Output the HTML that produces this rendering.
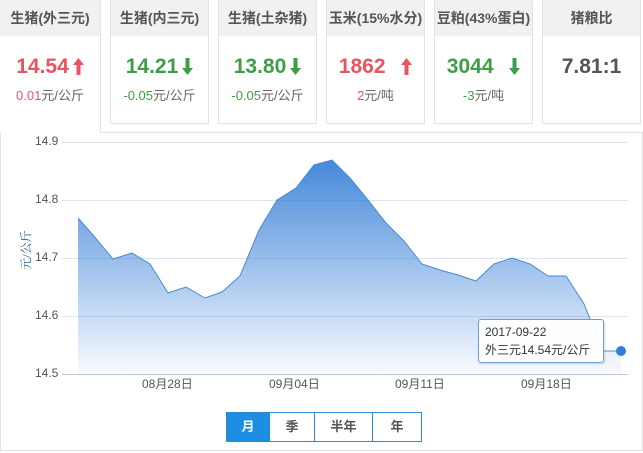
<!DOCTYPE html><html><head><meta charset="utf-8"><style>
body{margin:0;width:643px;height:453px;background:#fff;font-family:"Liberation Sans","Noto Sans CJK SC",sans-serif;position:relative;overflow:hidden}
.card{position:absolute;top:0;width:97px;height:123px;border:1px solid #e2e2e2;border-top:none;background:#fff;text-align:center}
.card .h{height:36px;background:#f1f1f1;line-height:36px;font-size:14px;font-weight:bold;color:#555}
.card .v{margin-top:18px;font-size:21px;font-weight:bold;line-height:26px}
.card .s{margin-top:5px;font-size:13px;color:#666}
.r{color:#e8555f}.g{color:#3e9e48}
.chart{position:absolute;left:0;top:132px;width:641px;height:317px;border:1px solid #e2e2e2}
.ax{position:absolute;font-size:12px;color:#555}
.btns{position:absolute;left:226px;top:412px;height:28px;border:1px solid #2a8ad6;display:flex;font-size:13px;font-weight:bold;color:#555}
.btns div{line-height:28px;text-align:center;border-left:1px solid #2a8ad6}
svg.ar{vertical-align:-2px;margin-left:4px}
</style></head><body>
<div class="chart"></div>
<div class="card" style="left:0;width:100px;height:133px;border:none;border-right:1px solid #e2e2e2;z-index:2"><div class="h">生猪(外三元)</div><div class="v r">14.54<svg class="ar" width="11" height="17" viewBox="0 0 11 17"><path d="M5.5 0 L11 7 L7.5 7 L7.5 17 L3.5 17 L3.5 7 L0 7Z" fill="#e8555f"/></svg></div><div class="s"><span class="r">0.01</span>元/公斤</div></div>
<div class="card" style="left:110px"><div class="h">生猪(内三元)</div><div class="v g">14.21<svg class="ar" width="11" height="17" viewBox="0 0 11 17"><path d="M5.5 17 L11 10 L7.5 10 L7.5 0 L3.5 0 L3.5 10 L0 10Z" fill="#3e9e48"/></svg></div><div class="s"><span class="g">-0.05</span>元/公斤</div></div>
<div class="card" style="left:218px"><div class="h">生猪(土杂猪)</div><div class="v g">13.80<svg class="ar" width="11" height="17" viewBox="0 0 11 17"><path d="M5.5 17 L11 10 L7.5 10 L7.5 0 L3.5 0 L3.5 10 L0 10Z" fill="#3e9e48"/></svg></div><div class="s"><span class="g">-0.05</span>元/公斤</div></div>
<div class="card" style="left:326px"><div class="h">玉米(15%水分)</div><div class="v r">1862 &nbsp;<svg class="ar" width="11" height="17" viewBox="0 0 11 17"><path d="M5.5 0 L11 7 L7.5 7 L7.5 17 L3.5 17 L3.5 7 L0 7Z" fill="#e8555f"/></svg></div><div class="s"><span class="r">2</span>元/吨</div></div>
<div class="card" style="left:434px"><div class="h">豆粕(43%蛋白)</div><div class="v g">3044 &nbsp;<svg class="ar" width="11" height="17" viewBox="0 0 11 17"><path d="M5.5 17 L11 10 L7.5 10 L7.5 0 L3.5 0 L3.5 10 L0 10Z" fill="#3e9e48"/></svg></div><div class="s"><span class="g">-3</span>元/吨</div></div>
<div class="card" style="left:542px"><div class="h">猪粮比</div><div class="v" style="color:#555">7.81:1</div></div>
<svg style="position:absolute;left:0;top:0" width="643" height="453">
<defs><linearGradient id="gr" x1="0" y1="0" x2="0" y2="1"><stop offset="0" stop-color="#3b82d8" stop-opacity=".95"/><stop offset="1" stop-color="#3b82d8" stop-opacity="0.03"/></linearGradient></defs>
<g stroke="#dde3ec" stroke-width="1"><line x1="62" y1="142.5" x2="628" y2="142.5"/><line x1="62" y1="200.5" x2="628" y2="200.5"/><line x1="62" y1="258.5" x2="628" y2="258.5"/><line x1="62" y1="316.5" x2="628" y2="316.5"/></g>
<path d="M78,218 L93,235 L113,259 L132,253 L150,264 L168,293 L186,287 L205,298 L222,292 L240,276 L259,230 L277,200 L296,188 L314,165 L332,160 L350,178 L368,200 L386,223 L404,241 L422,264 L440,270 L458,275 L476,281 L494,264 L512,258 L530,264 L548,276 L566,276 L584,304 L603,351 L621,351 L621,374 L78,374 Z" fill="url(#gr)"/>
<path d="M78,218 L93,235 L113,259 L132,253 L150,264 L168,293 L186,287 L205,298 L222,292 L240,276 L259,230 L277,200 L296,188 L314,165 L332,160 L350,178 L368,200 L386,223 L404,241 L422,264 L440,270 L458,275 L476,281 L494,264 L512,258 L530,264 L548,276 L566,276 L584,304 L603,351 L621,351" fill="none" stroke="#4a8ad0" stroke-width="1"/>
<line x1="62" y1="374.5" x2="628" y2="374.5" stroke="#c0c8d4"/>
<circle cx="621" cy="351" r="5" fill="#2f7fd6"/>
<text x="30" y="250" transform="rotate(-90 30 250)" font-size="12" fill="#2a5a8a" text-anchor="middle" font-family="Liberation Serif,Noto Serif CJK SC,serif">元/公斤</text>
</svg>
<div class="ax" style="left:35px;top:134px">14.9</div>
<div class="ax" style="left:35px;top:192px">14.8</div>
<div class="ax" style="left:35px;top:250px">14.7</div>
<div class="ax" style="left:35px;top:308px">14.6</div>
<div class="ax" style="left:35px;top:366px">14.5</div>
<div class="ax" style="left:142px;top:375px">08月28日</div>
<div class="ax" style="left:269px;top:375px">09月04日</div>
<div class="ax" style="left:395px;top:375px">09月11日</div>
<div class="ax" style="left:521px;top:375px">09月18日</div>
<div style="position:absolute;left:478px;top:319px;width:126px;height:44px;border:1px solid #6aa0dc;border-radius:3px;background:rgba(255,255,255,.95);font-size:12px;color:#333;padding:3px 0 0 6px;box-sizing:border-box;line-height:18px;box-shadow:1px 1px 2px rgba(0,0,0,.15)">2017-09-22<br>外三元14.54元/公斤</div>
<div class="btns"><div style="width:42px;border:none;background:#1e8ee0;color:#fff">月</div><div style="width:44px">季</div><div style="width:57px">半年</div><div style="width:48px">年</div></div>
</body></html>
